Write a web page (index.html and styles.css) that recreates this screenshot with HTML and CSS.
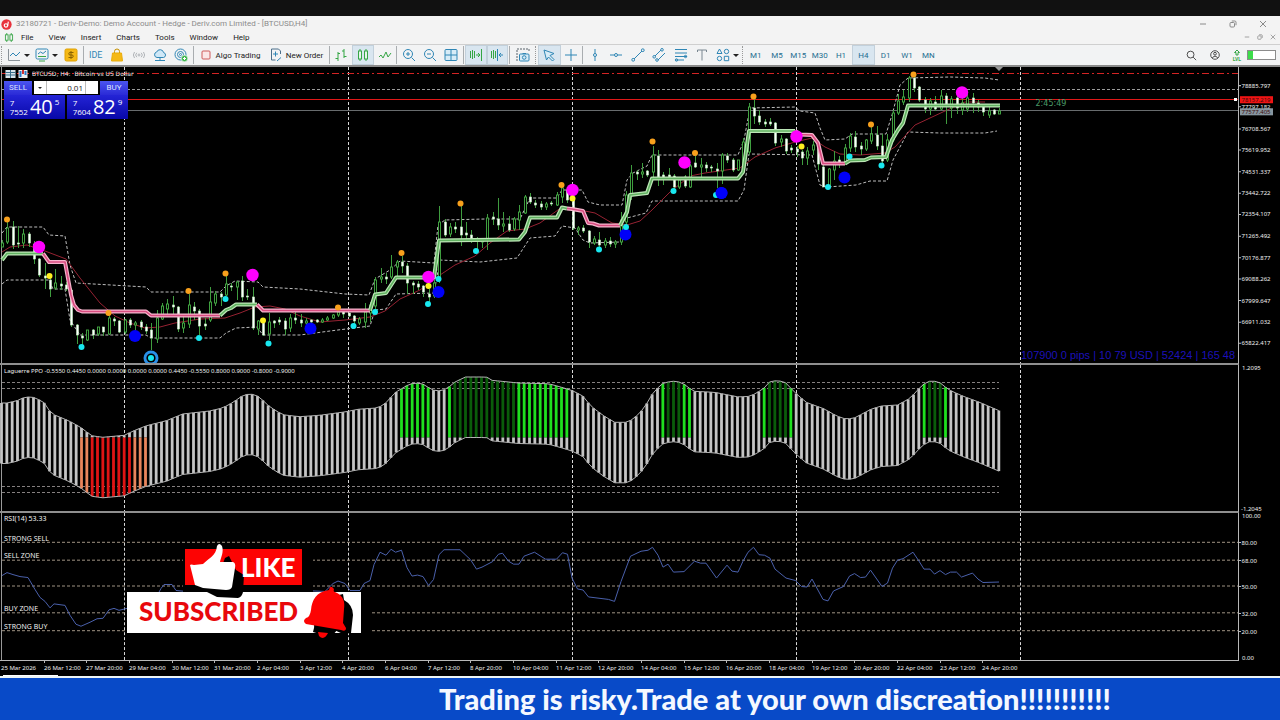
FILE: index.html
```html
<!DOCTYPE html>
<html lang="en">
<head>
<meta charset="utf-8">
<title>32180721 - Deriv-Demo: Demo Account - Hedge - Deriv.com Limited - [BTCUSD,H4]</title>
<link rel="stylesheet" href="styles.css">
</head>
<body>
<div class="app">
  <div class="strip"></div>
  <header class="titlebar">
    <svg class="logo" viewBox="0 0 12 12"><circle cx="6" cy="6" r="5.6" fill="#e8323c"/><circle cx="5.4" cy="7" r="1.8" fill="none" stroke="#fff" stroke-width="1.3"/><path d="M7.2 7.8 8 2.8" stroke="#fff" stroke-width="1.3" fill="none"/></svg>
    <h1 class="title">32180721 - Deriv-Demo: Demo Account - Hedge - Deriv.com Limited - [BTCUSD,H4]</h1>
    <div class="winbtns">
      <button aria-label="Minimize"><svg viewBox="0 0 8 8"><path d="M1 4h6"/></svg></button>
      <button aria-label="Restore"><svg viewBox="0 0 8 8"><rect x="1" y="2.5" width="4.5" height="4.5" rx="1"/><path d="M2.8 1h3A1.2 1.2 0 0 1 7 2.2v3"/></svg></button>
      <button aria-label="Close"><svg viewBox="0 0 8 8"><path d="M1 1l6 6M7 1L1 7"/></svg></button>
    </div>
  </header>
  <nav class="menubar">
    <svg class="menulogo" viewBox="0 0 10 10"><path d="M2.5 0v10M7.5 0v10" stroke="#3aa648"/><rect x="1" y="2" width="3" height="6" fill="#f3f3f3" stroke="#3aa648"/><rect x="6" y="2" width="3" height="6" fill="#f3f3f3" stroke="#3aa648"/></svg>
    <button>File</button><button>View</button><button>Insert</button><button>Charts</button><button>Tools</button><button>Window</button><button>Help</button>
    <div class="winbtns small">
      <button aria-label="Minimize chart"><svg viewBox="0 0 8 8"><path d="M1 4h6"/></svg></button>
      <button aria-label="Restore chart"><svg viewBox="0 0 8 8"><rect x="1" y="2.5" width="4.5" height="4.5" rx="1"/><path d="M2.8 1h3A1.2 1.2 0 0 1 7 2.2v3"/></svg></button>
      <button aria-label="Close chart"><svg viewBox="0 0 8 8"><path d="M1 1l6 6M7 1L1 7"/></svg></button>
    </div>
  </nav>
  <div class="toolbar">
    <i class="grip"></i>
    <div class="group files">
      <button aria-label="Chart type"><svg viewBox="0 0 14 14"><path d="M1.500 1v11.500H13" stroke="#8a9299"/><path d="M3 8l3-3 3 3 4-4"/></svg><b class="caret"></b></button>
      <button aria-label="Indicators"><svg viewBox="0 0 14 14"><rect x="1" y="1" width="12" height="10" rx="1.500"/><path d="M3 6l2.500-2 2.500 1.500L11 3"/><path d="M3 8.500h8M4 13h6" stroke="#3aa648"/></svg><b class="caret"></b></button>
      <button aria-label="Symbols"><svg viewBox="0 0 14 14"><rect x="1" y="1" width="12" height="12" rx="1.500" fill="#f5b916" stroke="#e0a000"/><path d="M9.500 4.500H6a1.200 1.200 0 0 0 0 2.500h2a1.200 1.200 0 0 1 0 2.500H4.500M7 3v8" stroke="#8a6200"/></svg></button>
    </div>
    <i class="sep"></i>
    <div class="group five">
      <button class="ide">IDE</button>
      <button aria-label="Market"><svg viewBox="0 0 14 14"><path d="M4.500 5V3.500a2.500 2.500 0 0 1 5 0V5" stroke="#c79100"/><path d="M2.500 5h9l1 8h-11z" fill="#f5b916" stroke="#e9ac0c"/></svg></button>
      <button aria-label="Signals"><svg viewBox="0 0 14 14"><g stroke="#b0b4b8"><circle cx="7" cy="7" r="1"/><path d="M4.800 4.800a3 3 0 0 0 0 4.400M9.200 4.800a3 3 0 0 1 0 4.400M2.500 4a5 5 0 0 0 0 6M11.500 4a5 5 0 0 1 0 6"/></g></svg></button>
      <button aria-label="VPS"><svg viewBox="0 0 14 14"><path d="M4 9.500a2.800 2.800 0 0 1-.3-5.500 3.600 3.600 0 0 1 6.900.6A2.500 2.500 0 0 1 10.500 9.500z" fill="#cfe8f7"/><path d="M7 9.500V12M2 12.500h10"/></svg></button>
      <button aria-label="Network"><svg viewBox="0 0 14 14"><circle cx="6.500" cy="6.500" r="5.500"/><circle cx="6.500" cy="6.500" r="3"/><circle cx="6.500" cy="6.500" r="1"/><circle cx="10.500" cy="10.500" r="3.200" fill="#3cb54a" stroke="#fff" stroke-width=".6"/><path d="M10.500 9v3M9 10.500h3" stroke="#fff"/></svg></button>
    </div>
    <i class="sep"></i>
    <div class="group trade">
      <button class="algo"><svg viewBox="0 0 14 14"><rect x="3" y="3" width="8" height="8" rx="1" fill="#fbe6e6" stroke="#cf5a5a"/></svg>Algo Trading</button>
      <button class="order"><svg viewBox="0 0 14 14"><path d="M11.500 6V3L9.500 1H2.500v11h4" stroke="#4a6f8a"/><path d="M6.500 3.500v5M4 6h5M8 13l4-3.500" /></svg>New Order</button>
    </div>
    <i class="sep"></i>
    <div class="group three">
      <button aria-label="Bars"><svg viewBox="0 0 14 14" class="gr"><path d="M4 4v9M1.500 10.500H4M4 5.500h2M10 1v9M8 3h2M10 8.500h2.500"/></svg></button>
      <button class="on" aria-label="Candles"><svg viewBox="0 0 14 14" class="gr"><path d="M4 1v12M10 1v12"/><rect x="2.500" y="3" width="3" height="8" fill="#e6f4ea"/><rect x="8.500" y="3" width="3" height="8" fill="#e6f4ea"/></svg></button>
      <button aria-label="Line"><svg viewBox="0 0 14 14" class="gr"><path d="M1 9l2-2 2 3 3-6 2 5 3-4"/></svg></button>
    </div>
    <i class="sep"></i>
    <div class="group three">
      <button aria-label="Zoom in"><svg viewBox="0 0 14 14"><circle cx="6" cy="6" r="4.500"/><path d="M9.500 9.500L13 13M6 4v4M4 6h4"/></svg></button>
      <button aria-label="Zoom out"><svg viewBox="0 0 14 14"><circle cx="6" cy="6" r="4.500"/><path d="M9.500 9.500L13 13M4 6h4"/></svg></button>
      <button aria-label="Tile"><svg viewBox="0 0 14 14"><rect x="1" y="1.500" width="12" height="11" rx="1" fill="#d7ecf7"/><path d="M7 1.500v11M1 7h12"/></svg></button>
    </div>
    <i class="sep"></i>
    <div class="group two">
      <button class="on" aria-label="Auto scroll"><svg viewBox="0 0 14 14" class="gr"><path d="M1.500 3v7M3.500 2v9M5.500 3v7M12.500 1v12M7 7h4M9 5l2 2-2 2"/></svg></button>
      <button class="on" aria-label="Chart shift"><svg viewBox="0 0 14 14"><path class="g" d="M1.500 3v7M3.500 2v9M5.500 3v7"/><path d="M7.500 1v12M9 7h4M11 5L9 7l2 2"/></svg></button>
    </div>
    <i class="sep"></i>
    <div class="group one">
      <button aria-label="Screenshot"><svg viewBox="0 0 14 14"><path d="M1 13V1h12v3" stroke="#59636b" stroke-dasharray="2 1"/><rect x="3.500" y="6" width="9.500" height="7" rx="1" fill="#d7ecf7"/><circle cx="8.200" cy="9.500" r="1.800"/><path d="M6.500 5.500h3.500"/></svg></button>
    </div>
    <i class="grip"></i>
    <div class="group two">
      <button class="on" aria-label="Cursor"><svg viewBox="0 0 14 14"><path d="M2 2l10 3.500-4 2 4 4-1.500 1.500-4-4L4.500 12z" fill="#d7ecf7"/></svg></button>
      <button aria-label="Crosshair"><svg viewBox="0 0 14 14"><path d="M7 1v12M1 7h12"/></svg></button>
    </div>
    <i class="sep"></i>
    <div class="group lines">
      <button aria-label="Vertical line"><svg viewBox="0 0 14 14"><path d="M7 1v4.500M7 8.500V13"/><circle cx="7" cy="7" r="1.500"/></svg></button>
      <button aria-label="Horizontal line"><svg viewBox="0 0 14 14"><path d="M1 7h4.500M8.500 7H13"/><circle cx="7" cy="7" r="1.500"/></svg></button>
      <button aria-label="Trend line"><svg viewBox="0 0 14 14"><path d="M3 11l8-8"/><circle cx="2.200" cy="11.800" r="1.400"/><circle cx="11.800" cy="2.200" r="1.400"/></svg></button>
      <button aria-label="Channel"><svg viewBox="0 0 14 14"><path d="M3 8l6-6M6 12l7-7"/><circle cx="2.200" cy="8.800" r="1.300"/><circle cx="10" cy="1.800" r="1.300"/><circle cx="5" cy="12" r="1.300"/></svg></button>
      <button aria-label="Fibonacci"><svg viewBox="0 0 14 14"><path d="M1 1.500h12M1 5h12M1 8.500h12M1 12h9"/><circle cx="2.500" cy="12" r="1.200"/><circle cx="11.500" cy="8.500" r="1.200"/></svg></button>
      <button aria-label="Text"><svg viewBox="0 0 14 14"><path d="M2.500 4V2h9v2M7 2v10.500" stroke="#7a8791"/></svg></button>
      <button class="wide" aria-label="Objects"><svg viewBox="0 0 14 14"><path d="M1 5.500L3.500 1 6 5.500z"/><circle cx="10.500" cy="3.500" r="2.200"/><circle cx="3.500" cy="10.500" r="2.200"/><path d="M8.300 8.300h4.400v4.400H8.300z"/></svg><b class="caret"></b></button>
    </div>
    <i class="grip"></i>
    <div class="group frames">
      <button>M1</button><button>M5</button><button>M15</button><button>M30</button><button>H1</button><button class="on">H4</button><button>D1</button><button>W1</button><button>MN</button>
    </div>
    <div class="right">
      <button aria-label="Search"><svg viewBox="0 0 14 14" class="dk"><circle cx="6.500" cy="6.500" r="4"/><path d="M9.500 9.500L13 13"/></svg></button>
      <button aria-label="Account"><svg viewBox="0 0 14 14" class="dk"><circle cx="7" cy="7" r="5"/><circle cx="7" cy="5.500" r="1.600"/><path d="M4 10.500a3.200 3.200 0 0 1 6 0"/></svg></button>
      <button class="lvl"><svg viewBox="0 0 8 7" class="gr"><path d="M1.500 3.500L4 1l2.500 2.500H5V6H3V3.500z"/></svg>LVL</button>
      <div class="level"></div>
    </div>
  </div>

  <main class="workspace">
    <div class="pane price">
      <svg id="price" viewBox="0 67 1238 296" preserveAspectRatio="none"></svg>
      <div class="caption">
        <svg viewBox="0 0 22 8"><rect x="0" y="0" width="10" height="8" fill="#d8e4ea"/><path d="M0 2.500h10M0 5h10M5 0v8" stroke="#3b6f8c"/><rect x="13" y="0" width="9" height="8" fill="#eee"/><path d="M15 1v6M20 1v4" stroke="#2878c8" stroke-width="2"/><path d="M17.500 0v4" stroke="#d03030" stroke-width="2"/></svg>
        <span>BTCUSD, H4:&nbsp; Bitcoin vs US Dollar</span>
      </div>
      <form class="ticket" onsubmit="return false">
        <div class="row">
          <button class="side">SELL</button>
          <div class="volume">
            <button aria-label="Less"><b class="caret"></b></button>
            <input aria-label="Volume" value="0.01">
            <button aria-label="More"><b class="caret up"></b></button>
          </div>
          <button class="side">BUY</button>
        </div>
        <div class="row">
          <button class="quote"><span class="base">7<br>7552</span><span class="big">40</span><sup>5</sup></button>
          <button class="quote"><span class="base">7<br>7604</span><span class="big">82</span><sup>9</sup></button>
        </div>
      </form>
    </div>
    <div class="axis price"><svg id="priceAxis" viewBox="1239 67 41 296" preserveAspectRatio="none"></svg></div>
    <div class="pane ppo"><svg id="ppo" viewBox="0 365 1238 146" preserveAspectRatio="none"></svg></div>
    <div class="axis ppo"><svg id="ppoAxis" viewBox="1239 365 41 146" preserveAspectRatio="none"></svg></div>
    <div class="pane rsi">
      <svg id="rsi" viewBox="0 513 1238 148" preserveAspectRatio="none"></svg>
      <svg class="promo" viewBox="120 540 250 104">
        <rect x="183" y="545" width="130" height="47" fill="#000"/>
        <rect x="361" y="592" width="9" height="41" fill="#000"/>
        <rect x="185" y="549" width="117" height="36" fill="#fd0303"/>
        <rect x="127" y="592" width="234" height="41" fill="#fff"/>
        <path d="M196 585L203 590 217 597 238 598Q242 597 243 592L244 575 236 570 229 556 225 558 222 566Z" fill="#000"/>
        <path d="M190 565Q191 564 194 565L203 564C209 558 216 556 217 546Q219 542 222 546C224 552 221 557 220 562L233 562Q236 563 235 568L232 587Q231 590 226 590L203 588 195 585Z" fill="#fff"/>
        <text x="241" y="577" class="like">LIKE</text>
        <text x="139" y="621" class="subs">SUBSCRIBED</text>
        <path d="M339 595L343 594 344 600Q353 605 353 615L351 633 343 634 332 629 326 636 313 632 315 624 338 629Z" fill="#000"/>
        <path d="M314 625L338 629Q329 641 320 636 315 633 314 625Z" fill="#000"/>
        <path d="M318 632L328 633Q324 641 319 636Z" fill="#fd0303"/>
        <path d="M329 590Q330 584 334 589 333 592 335 592C344 596 345 602 344 609L343 623 346 628Q346 632 341 630L306 624Q302 621 306 618 310 617 311 610C312 600 316 592 329 590Z" fill="#fd0303"/>
      </svg>
    </div>
    <div class="axis rsi"><svg id="rsiAxis" viewBox="1239 513 41 148" preserveAspectRatio="none"></svg></div>
    <div class="dates"><svg id="dates" viewBox="0 661 1280 15" preserveAspectRatio="none"></svg></div>
  </main>
  <div class="tabs"></div>
  <footer class="banner"><p>Trading is risky.Trade at your own discreation!!!!!!!!!!!</p></footer>
</div>
<script src="chart.js"></script>
</body>
</html>
```
FILE: styles.css
```css
* { box-sizing: border-box; }
body { margin: 0; background: #000; font-family: Roboto, "Open Sans", sans-serif; }
button { border: 0; padding: 0; margin: 0; background: none; font: inherit; color: inherit; }
.app { min-height: 100vh; display: flex; flex-direction: column; }
.strip { height: 16px; background: #111; }

.titlebar, .menubar { display: flex; align-items: center; background: #f3f3f3; font-size: 8px; }
.titlebar { height: 16px; padding: 0 12px 0 1px; gap: 4px; color: #8b8b8b; }
.logo { width: 11px; height: 11px; }
.title { margin: 0; font-size: 8px; font-weight: 400; line-height: 14px; }
.winbtns { margin-left: auto; display: flex; gap: 20px; }
.winbtns button { width: 10px; display: flex; justify-content: center; }
.winbtns svg { width: 8px; height: 8px; fill: none; stroke: #8a8a8a; stroke-width: 1; }
.menubar { height: 13px; padding: 0 2px 2px 4px; border-bottom: 1px solid #cfcfcf; color: #222; }
.menulogo { width: 10px; height: 9px; margin-right: 7px; }
.menubar > button { line-height: 11px; margin-right: 15px; }
.small.winbtns { gap: 3px; }
.small.winbtns svg { width: 6px; height: 6px; }

.toolbar { height: 20px; display: flex; align-items: center; background: #f2f3f4; font-size: 8px; color: #222; }
.toolbar svg { width: 14px; height: 14px; flex: none; fill: none; stroke: #2f86b5; stroke-width: 1; }
.toolbar svg.gr, .toolbar .g { stroke: #35a645; }
.toolbar svg.dk { stroke: #333; }
.grip { width: 1px; height: 18px; margin: 0 2px 0 1px; border-left: 1px dotted #999; }
.sep { width: 1px; height: 18px; margin: 0 1px; background: #a9adb0; }
.group { display: flex; height: 20px; flex: none; }
.group button { flex: 1; display: flex; align-items: center; justify-content: center; gap: 3px; }
.group .on { background: #d9e6f0; border: 1px solid #c2d0db; }
.caret { border: 3px solid transparent; border-top-color: #222; border-bottom: 0; }
.files { width: 78px; }
.files button:last-child { flex: 0 0 22px; }
.five { width: 107px; }
.group .ide { color: #2f86b5; font-size: 9px; }
.trade { width: 133px; }
.group .algo { flex: 0 0 69px; }
.three { width: 64px; }
.two { width: 43px; }
.one { width: 23px; }
.lines { width: 157px; }
.group .wide { flex: 0 0 28px; }
.frames { width: 194px; color: #1e6d90; }
.right { margin-left: auto; padding-right: 4px; display: flex; align-items: center; gap: 12px; }
.toolbar .right button svg.dk { width: 12px; height: 12px; }
.right button { display: flex; }
.right .lvl { flex-direction: column; align-items: center; font-size: 5px; line-height: 6px; font-weight: 700; color: #35a645; }
.right .lvl svg { width: 8px; height: 7px; }
.level { width: 29px; height: 10px; margin-left: -6px; border: 1px solid #8c8c8c; background: linear-gradient(90deg, #3ddc4a 5px, #fff 5px); }

.workspace { flex: 1; display: grid; grid-template-columns: minmax(0, 1fr) 41px; grid-template-rows: 298fr 148fr 148fr 15fr; border-top: 2px solid #8a8a8a; min-height: 560px; background: #000; }
.workspace text { font-family: "Noto Sans", sans-serif; font-size: 6px; fill: #f0f0f0; }
.pane { position: relative; min-height: 0; border-right: 1px solid #b8b8b8; border-bottom: 2px solid #8f8f8f; }
.pane.rsi { border-bottom: 1px solid #b8b8b8; }
.pane > svg:first-child, .axis svg, .dates svg { display: block; width: 100%; height: 100%; position: absolute; }
.axis, .dates { position: relative; }
.dates { grid-column: 1 / -1; }
.workspace .gain { font: 11px "Liberation Sans", sans-serif; fill: #1c10b8; }
.workspace .timer { font: 8px "DejaVu Sans", sans-serif; fill: #4b9c68; }
.workspace .dark { fill: #3a0a0a; }
.workspace .note { font-size: 7px; }

.caption { position: absolute; top: 3px; left: 5px; display: flex; align-items: center; gap: 4px; color: #eee; font: 6px/8px "DejaVu Sans", sans-serif; }
.caption svg { width: 23px; height: 8px; }
.ticket { position: absolute; top: 14px; left: 4px; width: 124px; background: #0d0da0; }
.row { display: flex; gap: 2px; background: #000; }
.side { flex: 0 0 28px; height: 14px; color: #dfe3ff; font-size: 8px; line-height: 14px; background: linear-gradient(#4b55f0, #2a2ad6); }
.volume { flex: 1; min-width: 0; display: flex; height: 13px; background: #fff; }
.volume button { flex: 0 0 12px; display: flex; align-items: center; justify-content: center; }
.volume .caret { border-width: 2px 2px 0; }
.volume .up { border-width: 0 2px 2px; border-color: transparent transparent #222; }
.volume input { flex: 1; width: 0; min-width: 0; border: 0; border-left: 1px solid #bbb; border-right: 1px solid #bbb; padding: 0 2px; text-align: right; font: 8px "Open Sans", sans-serif; color: #222; }
.quote { flex: 1; height: 24px; display: flex; align-items: center; justify-content: center; gap: 2px; color: #fff; font-family: "Open Sans", sans-serif; background: linear-gradient(#2424d6, #0808a8); }
.base { font-size: 8px; line-height: 9px; text-align: left; }
.big { font-size: 20px; line-height: 22px; }
.quote sup { font-size: 8px; line-height: 8px; align-self: flex-start; padding: 3px 0 0; vertical-align: baseline; }
.promo { position: absolute; left: 120px; top: 27px; width: 250px; height: 104px; }
.workspace .like, .workspace .subs { font-family: Lato, sans-serif; font-weight: 900; font-size: 26px; fill: #fff; }
.workspace .subs { fill: #e8080c; }

.tabs { height: 2px; background: #eef6f6; }
.banner { min-height: 42px; padding-left: 34.3%; background: #084ac8; display: flex; align-items: center; overflow: hidden; }
.banner p { margin: 0; white-space: nowrap; color: #f4f8ff; font: 900 29px/42px Lato, sans-serif; }
```
FILE: chart.js
```js
const NS = 'http://www.w3.org/2000/svg';
const $ = id => document.getElementById(id);
function add(parent, tag, attrs, text) {
  const el = document.createElementNS(NS, tag);
  for (const k in attrs) el.setAttribute(k, attrs[k]);
  if (text) el.textContent = text;
  parent.appendChild(el);
  return el;
}
const X = i => 2 + i * 16 / 3;
const line = (p, points, stroke, width = 1, extra = {}) =>
  add(p, 'polyline', { points, fill: 'none', stroke, 'stroke-width': width, 'stroke-linejoin': 'round', ...extra });
const dash = { 'stroke-dasharray': '3 2' };

function frame(svg, top, bottom) {
  line(svg, `1.5,${top} 1.5,${bottom}`, '#9a9a9a');
  for (let x = 124.5; x < 1100; x += 224)
    line(svg, `${x},${top} ${x},${bottom}`, '#d8d8d8', 1, dash);
}

// Price pane
const price = $('price');
frame(price, 67, 363);
line(price, '2,73.5 1238,73.5', '#d42424', 1, { 'stroke-dasharray': '7 3 2 3' });
line(price, '2,89.5 1238,89.5', '#9c9c9c', 1, dash);
line(price, '2,99.5 1238,99.5', '#e01818');
line(price, '2,110.5 1238,110.5', '#686c6e');
add(price, 'rect', { x: 1234, y: 98, width: 3, height: 3, fill: '#fff' });
add(price, 'path', { d: 'M995 67h8l-4 4z', fill: '#999' });

line(price, '2,233 7,227 43,227 49,235 65,236 70,265 76,283 146,287 151,292 220,292 226,286 235,281 258,282 263,287 300,289 345,294 369,295 375,279 390,270 400,261 434,263 438,225 445,220 485,219 520,219 530,198 557,198 562,190 582,190 588,202 600,205 622,205 627,180 633,173 647,166 652,155 738,155 744,140 750,108 795,107 800,111 815,113 820,128 825,140 845,139 852,134 886,134 892,115 900,85 908,78 950,77 985,78 999,80', '#bdbdbd', 1, dash);
line(price, '2,284 7,280 49,280 53,289 65,289 70,320 80,335 146,335 151,338 220,338 226,333 236,328 257,327 263,335 300,335 330,331 370,326 375,310 386,309 396,294 434,293 440,260 480,262 517,258 530,238 555,236 562,226 575,228 583,240 590,243 620,242 627,218 646,213 652,201 738,201 744,190 749,154 812,155 820,185 827,187 856,185 870,181 887,181 893,160 908,132 940,133 985,133 997,131', '#bdbdbd', 1, dash);
line(price, '2,252 10,247 27,245 45,251 66,259 80,278 100,303 115,316 130,323 145,328 160,327 175,323 200,319 225,318 240,313 255,307 270,306 285,309 300,316 320,322 345,320 370,317 385,311 400,299 420,290 440,275 455,265 475,256 490,243 507,231 525,229 540,223 562,207 575,209 595,213 612,223 627,225 640,221 652,210 670,192 690,176 705,173 740,168 755,157 775,148 795,142 812,138 825,147 840,154 860,155 885,153 895,147 915,125 945,111 965,102 985,102', '#962232');

// high, body top, body bottom, low, filled
const candles = `240,243,247,247,0 221,228,242,244,0 221,227,245,249,1 226,243,244,248,1 229,234,243,248,0 232,234,243,247,1 241,244,259,264,1 258,259,275,277,1 263,276,278,289,1 277,280,289,297,1
269,283,288,290,0 276,284,286,290,1 282,285,289,291,1 288,290,325,327,1 324,325,335,344,1 333,336,338,345,1 330,330,340,341,0 329,330,335,339,1 327,327,334,336,0 327,327,332,336,1
315,318,334,335,0 317,319,321,326,1 320,321,332,333,1 319,320,332,334,0 318,320,325,328,1 321,323,325,330,0 320,322,327,330,1 324,327,331,334,1 323,330,338,350,1 310,318,339,343,0
303,306,319,320,0 299,304,309,315,0 296,305,307,317,1 306,307,329,332,1 315,323,328,333,0 294,305,324,328,0 302,307,311,320,1 309,311,326,335,1 318,324,326,330,1 287,302,320,322,0
291,294,303,306,0 292,294,297,306,1 276,284,295,296,0 283,286,287,291,1 281,282,287,300,0 276,281,297,301,1 289,296,297,300,1 287,297,328,330,1 320,321,329,335,0 320,320,335,336,1
313,322,334,340,0 320,321,323,328,1 317,320,322,325,1 318,321,329,335,1 314,318,328,332,0 312,318,320,324,1 314,320,323,327,1 318,321,323,326,0 319,320,322,327,1 319,320,322,323,1
318,320,322,323,0 316,318,320,321,0 314,315,318,319,0 311,312,315,317,0 312,312,314,318,1 313,313,316,317,1 315,316,321,326,1 317,319,323,325,0 303,312,322,328,0 302,305,313,322,0
277,280,306,311,0 268,277,279,283,0 273,277,279,284,1 255,267,277,279,0 260,262,267,276,0 256,262,266,273,1 263,266,283,294,1 281,283,285,294,1 281,284,287,290,1 285,286,292,297,1
289,294,297,302,1 280,283,296,298,0 206,222,277,283,0 219,222,235,237,1 223,227,234,237,0 222,227,229,233,1 206,227,235,246,1 222,233,235,242,1 230,235,239,243,1 237,239,241,250,1
238,240,242,248,0 214,218,240,250,0 212,217,219,225,1 198,219,225,230,1 212,224,226,232,0 216,224,230,232,1 217,219,229,231,0 205,212,220,230,0 195,197,213,214,0 193,197,202,204,1
200,203,205,208,1 201,204,207,210,1 202,204,207,210,0 201,203,204,206,1 192,195,205,206,0 186,188,197,203,0 187,190,200,203,1 195,200,228,230,1 226,228,230,235,0 225,228,231,233,1
230,231,242,248,1 236,239,243,245,0 232,240,245,249,1 238,241,245,248,0 237,241,244,247,1 240,242,244,248,0 212,220,242,245,0 191,195,222,232,0 165,173,195,200,0 170,172,174,180,1
163,172,174,178,0 170,171,175,177,1 146,155,172,177,0 150,156,178,186,1 172,175,177,185,1 168,175,177,180,1 174,176,187,189,1 178,180,187,189,0 175,177,186,188,1 164,166,187,188,0
156,163,167,168,1 158,165,167,178,0 162,165,168,172,1 165,167,168,172,1 163,169,171,188,1 153,155,171,184,0 153,156,160,163,1 158,160,170,172,1 160,160,170,171,0 138,142,165,168,0
103,107,152,155,0 98,108,116,124,1 110,116,122,125,1 119,122,124,127,1 118,122,124,126,1 122,123,143,146,1 135,139,142,147,0 138,139,151,154,1 145,148,150,153,1 146,149,152,157,1
150,152,158,165,1 147,151,158,165,0 141,145,150,155,0 142,143,164,170,1 160,167,187,187,1 168,169,187,188,0 151,161,170,180,0 156,160,162,168,1 144,148,162,165,0 133,136,148,152,0
131,137,147,152,1 142,146,149,155,1 139,140,149,151,0 127,134,141,144,0 126,135,146,150,1 134,146,161,167,1 134,140,160,162,0 110,113,140,142,0 94,101,113,115,0 90,97,102,105,0
76,78,98,102,0 76,78,88,92,1 86,87,100,102,1 97,100,109,113,1 98,101,109,115,0 96,102,109,111,1 90,96,109,110,0 93,96,105,124,1 96,99,108,118,0 91,98,108,114,1
98,103,110,115,0 94,98,109,112,0 93,98,103,113,1 100,103,107,112,1 105,106,112,116,1 107,111,115,118,0 109,110,114,115,1 108,111,114,114,0`;
candles.split(/\s+/).forEach((row, i) => {
  const [h, t, b, l, f] = row.split(',').map(Number);
  const x = Math.round(X(i));
  add(price, 'path', { d: `M${x + .5} ${h}V${l}`, stroke: '#3f9c3f' });
  add(price, 'rect', { x: x - .5, y: t, width: 2, height: Math.max(b - t, 1), fill: f ? '#fff' : '#000', stroke: f ? '#c4f2c4' : '#46b046', 'stroke-width': f ? .6 : .9 });
});

const trend = [
  ['g', '2,260 7,253.5 43,253.5'],
  ['p', '43,253.5 49,262 65,262 71,295 74,305 78,310 82,311.5 146,311.5 151,315.5 220,315.5'],
  ['g', '220,315.5 226,310 231,308 236,304.5 257,304.5'],
  ['p', '257,304.5 263,310.5 370,310.5'],
  ['g', '370,310.5 375,294.5 386,293 396,277.500 434,277.500 439,240.500 519,239.500 525,232 530,217.500 557,217.500 562,207.500 567,208.500'],
  ['p', '567,208.500 572,209 583,211 588,223 593,223.500 599,225.500 620,225.500'],
  ['g', '620,225.500 627,212 630,195 647,193 652,178.500 738,178.500 743,172 749,131 795,131'],
  ['p', '795,131 800,134.500 812,135 818,143 823,163.500 845,163.500'],
  ['g', '845,163.500 850,160.500 865,160 871,157.500 886,157 892,140 898,130 903,123 908,105.500 1000,105.500']
];
for (const [c, pts] of trend) {
  line(price, pts, c === 'g' ? '#bce6b6' : '#f6b4cc', 4);
  line(price, pts, c === 'g' ? '#62b262' : '#d84c80', 1.6);
}
const dots = (list, r, fill) => list.split(' ').forEach(p => {
  const [cx, cy] = p.split(',');
  add(price, 'circle', { cx, cy, r, fill });
});
dots('151,358', 7.5, '#2a90e8');
dots('151,358', 4.6, '#000');
dots('135,336 310.5,328.5 438.5,292 625.5,234.500 721.5,193 844.5,177.5', 6, '#0000f8');
dots('7,219.5 108.5,313 188.5,291 225.5,273.5 338,307.5 401.5,253 460.5,203.5 561.5,185 652.5,141.5 695,153 753.5,96.5 871,124.5 913.5,74.5', 3, '#f8a01c');
dots('81.5,347 199,338 225.5,299 268.5,343.5 353.5,326 375,312 428,304 438.5,279 476,251 599,249.5 626,227 673.5,191 716,195 828,187 849.5,156.5 881.5,165.5 151,358', 3, '#18e8f0');
dots('721.5,193', 6, '#0000f8');
dots('39,247 252.5,275 428.5,277 572.5,190 684.5,162.5 796.5,136.5 962,92.5', 6.2, '#ff00ff');
dots('49.5,276 263,320.5 428.5,286 572.5,198.5 801.5,146.5', 3, '#fff020');
add(price, 'text', { x: 1035.5, y: 106, class: 'timer' }, '2:45:49');
add(price, 'text', { x: 1021, y: 359, class: 'gain' }, '107900 0 pips | 10 79 USD | 52424 | 165 48');

function tick(svg, y, label) {
  line(svg, `1239,${y} 1241,${y}`, '#b8b8b8');
  add(svg, 'text', { x: 1241.5, y: y + 2 }, label);
}
const pa = $('priceAxis');
[[85.5, '78885.797'], [106.5, '77797.182'], [128.5, '76708.567'], [149.5, '75619.952'], [171, '74531.337'], [192.5, '73442.722'], [213.5, '72354.107'], [235, '71265.492'], [256.5, '70176.877'], [277.5, '69088.262'], [299, '67999.647'], [320.5, '66911.032'], [341.5, '65822.417']].forEach(([y, s]) => tick(pa, y, s));
add(pa, 'rect', { x: 1240, y: 96, width: 33, height: 7, fill: '#f01414' });
add(pa, 'text', { x: 1241.5, y: 102, class: 'dark' }, '78157.219');
add(pa, 'rect', { x: 1240, y: 108, width: 33, height: 7, fill: '#8796a0' });
add(pa, 'text', { x: 1241.5, y: 114, class: 'dark' }, '77577.405');

// Laguerre PPO pane
const ppo = $('ppo');
frame(ppo, 365, 511);
for (const y of [382.5, 388.5, 486.5, 492.5]) line(ppo, `2,${y} 999,${y}`, '#858080', 1, dash);
const curve = '2,403 8,403 20,400 25,397 33,397 44,401.7 49,410 55,415 65,419 73,422.7 82,428 92,435.7 103,437.3 125,435.3 133,431.3 147,425.7 167,420.7 183,414 210,411 223,408 233,402.7 243,395.7 250,393.7 257,395.3 263,400 270,406.7 283,414.7 300,416.7 320,415.3 347,411.7 358,409.3 377,408 384,405.3 396,392.3 410.6,383.7 421.6,383 433,390 441,391 447,389 455.5,382 466,377 487,377 492,380.3 519,383 549,383.7 560,386.7 572,390.3 583,395.7 592,406.7 604.5,416 615,422.3 628,422.3 635,418 645,407.7 651.5,395.7 661.6,384 672,381 682,382.3 694,391.3 715,392.3 739,397 751,396.3 763.7,389 770,382 778,380.3 786,382.7 796,393 806.5,402.3 825,409 837,416 847,419.3 855.5,417.7 872,409 882,406 898,405 910.6,398.3 923,384.7 932,380.3 941,383 949,389.7 963.7,396.3 980,402.3 999.6,410.7'.split(' ').map(p => p.split(',').map(Number));
const at = x => {
  const k = Math.max(1, curve.findIndex(p => p[0] >= x));
  const [a, b] = [curve[k - 1], curve[k]];
  return a[1] + (b[1] - a[1]) * (x - a[0]) / (b[0] - a[0]);
};
const MID = 437.5, BAND = 60.5;
const ranges = [[15, 16, '#e9855c'], [17, 24, '#e01414'], [25, 27, '#e9855c'], [75, 80, '#1fe01f'], [84, 84, '#1fe01f'], [85, 96, '#0a5c0a'], [97, 106, '#1fe01f'], [124, 124, '#1fe01f'], [125, 127, '#0a5c0a'], [128, 129, '#1fe01f'], [143, 143, '#1fe01f'], [144, 147, '#0a5c0a'], [148, 148, '#1fe01f'], [173, 173, '#1fe01f'], [174, 176, '#0a5c0a'], [177, 177, '#1fe01f']];
const upper = [];
for (let i = 0; i < 188; i++) {
  const x = X(i) - 0.5, y = at(X(i)), hit = ranges.find(r => i >= r[0] && i <= r[1]);
  upper.push([x, y]);
  const bar = (t, b, fill) => b > t && add(ppo, 'rect', { x: x - 1.4, y: t, width: 2.8, height: b - t, fill });
  if (!hit) bar(y, y + BAND, '#c4c4c4');
  else if (i < 30) { bar(y, MID, '#c4c4c4'); bar(Math.max(y, MID), y + BAND, hit[2]); }
  else { bar(y, MID, hit[2]); bar(MID, y + BAND, '#c4c4c4'); }
}
line(ppo, upper.map(p => p.join()).join(' '), '#b4b4b4');
line(ppo, upper.map(p => `${p[0]},${p[1] + BAND}`).join(' '), '#b4b4b4');
add(ppo, 'text', { x: 4, y: 373 }, 'Laguerre PPO -0.5550 0.4450 0.0000 0.0000 0.0000 0.0000 0.4450 -0.5550 0.8000 0.9000 -0.8000 -0.9000');
add($('ppoAxis'), 'text', { x: 1242, y: 370 }, '1.2095');
add($('ppoAxis'), 'text', { x: 1241, y: 509 }, '-1.2045');

// RSI pane
const rsi = $('rsi');
frame(rsi, 513, 661);
for (const y of [542.5, 560.5, 586.5, 613.5, 631.5]) line(rsi, `2,${y} 1238,${y}`, '#a09484', 1, dash);
line(rsi, '2,576 7,573 13,575 20,577 28,578 35,590 40,598 45,602 50,608.5 54,604.5 65,606 70,616 76,625 81,627 90,623 97,619.5 103,619 109,610.5 114,609 119,611 127,609 155,600 161,589 164,585 172,585 176,591 186,592 189,586 194,586 325,592 333,584 338,581.5 345,584 350,591 360,591 364,584 370,581 374,565 380,552.5 386,555.5 391,549.5 395.5,552.5 401.5,550.5 407,568 412,576.5 417.5,575.5 423,577 428.5,586 433.5,580 439,555 444,550 460,550 470.5,560 476.5,569.5 482,567.5 492.5,562 498.5,554.5 502.5,553.5 508.5,561.5 513.5,564.5 519,564.5 524,556.5 534.5,552.5 545.5,559.5 556.5,559.5 562.5,553 567.5,554.5 572,578.5 577.5,589.5 583,590.5 588.5,597.5 608.5,600 614.5,602 621,582 630.5,556.5 641,551.5 648,550.5 652.5,547.5 658,555.5 663,567.5 668,564.5 673.5,572.5 684,572 694.5,561.5 700.5,563.5 706,563.5 716.5,578.5 727,565.5 732,571.5 738,572.5 743,561.5 748,552.5 753.5,547.5 759,555 764.5,555.5 770,558.5 775,569.5 786,578.5 795.5,581 801.5,587 807,587.5 812,579.5 823,600 828,601.5 833.5,591.5 843.5,587 849.5,576.5 854.5,574 860.5,578 865.5,577.5 870.5,570.5 882,587 887.5,583.5 892.5,568.5 897.5,560.5 903,559 913,552.5 919,561.5 924,569.5 930,569.5 934.5,574.5 940,571 945.5,575 950.5,572.5 956.5,572.5 961.5,577.5 972.5,573.5 978,579.5 983,583 999,582.5', '#4a60ac');
add(rsi, 'text', { x: 4, y: 521, class: 'note' }, 'RSI(14) 53.33');
[[541, 'STRONG SELL'], [558.5, 'SELL ZONE'], [612, 'BUY ZONE'], [630, 'STRONG BUY']].forEach(([y, s]) => add(rsi, 'text', { x: 4, y, class: 'note' }, s));
const ra = $('rsiAxis');
[[542.5, '80.00'], [560.5, '68.00'], [586.5, '50.00'], [613.5, '32.00'], [631.5, '20.00']].forEach(([y, s]) => tick(ra, y, s));
add(ra, 'text', { x: 1242, y: 518 }, '100.00');
add(ra, 'text', { x: 1242, y: 660 }, '0.00');

// Time axis
'25 Mar 2026|26 Mar 12:00|27 Mar 20:00|29 Mar 04:00|30 Mar 12:00|31 Mar 20:00|2 Apr 04:00|3 Apr 12:00|4 Apr 20:00|6 Apr 04:00|7 Apr 12:00|8 Apr 20:00|10 Apr 04:00|11 Apr 12:00|12 Apr 20:00|14 Apr 04:00|15 Apr 12:00|16 Apr 20:00|18 Apr 04:00|19 Apr 12:00|20 Apr 20:00|22 Apr 04:00|23 Apr 12:00|24 Apr 20:00'.split('|').forEach((s, k) => {
  const x = Math.round(1 + k * 128 / 3);
  if (k) line($('dates'), `${x + .5},661 ${x + .5},663`, '#b8b8b8');
  add($('dates'), 'text', { x, y: 669.5 }, s);
});
add($('dates'), 'rect', { x: 3, y: 675, width: 55, height: 1, fill: '#fff' });
```
